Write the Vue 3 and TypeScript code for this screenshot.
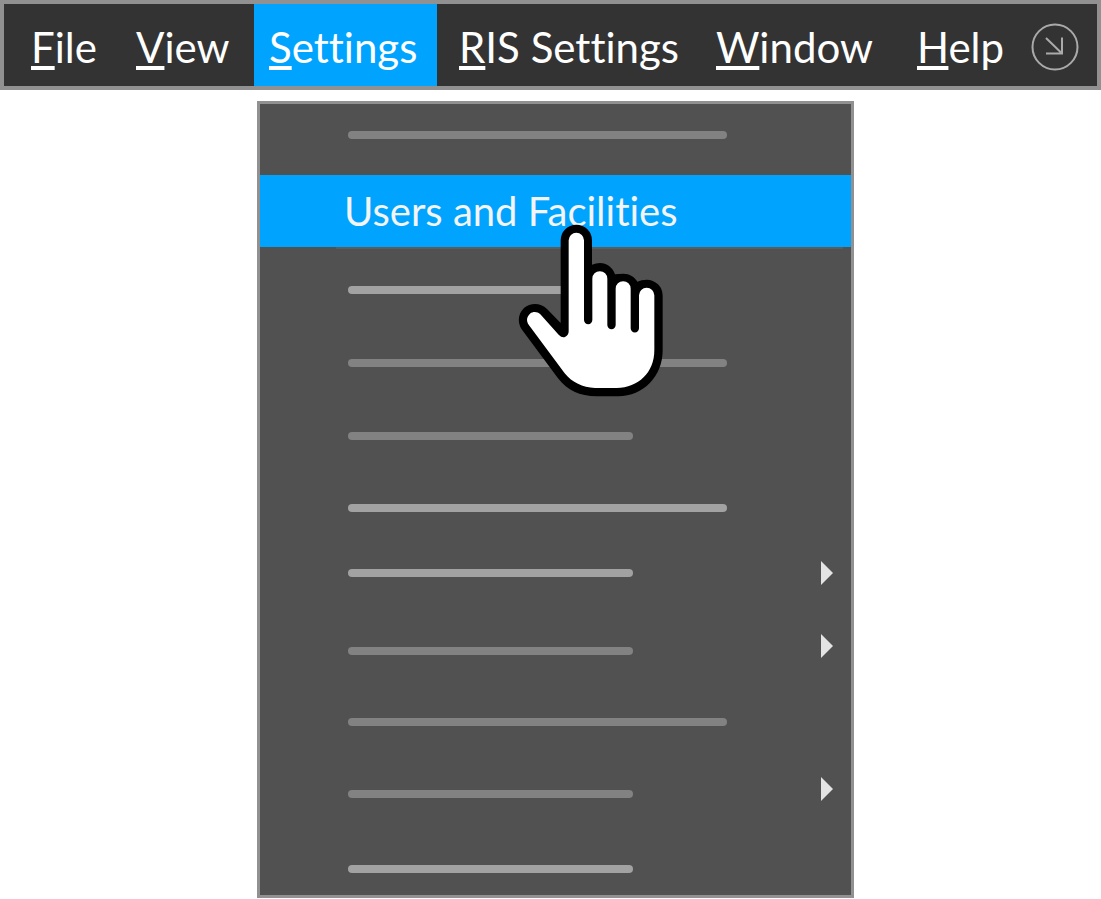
<script setup lang="ts">
interface MenuEntry {
  key: string
  rest: string
  active?: boolean
}

interface Row {
  id: number
  long: boolean
  bright: boolean
  submenu?: boolean
  level?: boolean
}

const entries: MenuEntry[] = [
  { key: 'F', rest: 'ile' },
  { key: 'V', rest: 'iew' },
  { key: 'S', rest: 'ettings', active: true },
  { key: 'R', rest: 'IS Settings' },
  { key: 'W', rest: 'indow' },
  { key: 'H', rest: 'elp' },
]

const rows: Row[] = [
  { id: 1, long: false, bright: true },
  { id: 2, long: true, bright: false },
  { id: 3, long: false, bright: false },
  { id: 4, long: true, bright: true },
  { id: 5, long: false, bright: true, submenu: true, level: true },
  { id: 6, long: false, bright: false, submenu: true },
  { id: 7, long: true, bright: false },
  { id: 8, long: false, bright: false, submenu: true },
  { id: 9, long: false, bright: true },
]
</script>

<template>
  <div class="page">
    <nav class="menubar">
      <button
        v-for="entry in entries"
        :key="entry.key"
        type="button"
        class="entry"
        :class="{ active: entry.active }"
      ><span class="accel">{{ entry.key }}</span>{{ entry.rest }}</button>
      <button type="button" class="corner" aria-label="Collapse">
        <svg class="corner-icon" viewBox="0 0 48 48" aria-hidden="true">
          <circle cx="24" cy="24" r="22.5" />
          <path d="M15 15 L31 30.5 M31 14.500V30.500H15" />
        </svg>
      </button>
    </nav>

    <div class="dropdown">
      <div class="row first"><span class="line long"></span></div>
      <button type="button" class="selected">
        Users and Facilities
        <svg class="hand" viewBox="48 189 444 525" aria-hidden="true">
          <path
            fill="#000"
            d="M182 241a47 47 0 0 1 94 0V314Q288 309 300 309C320 309 338 322 345 343Q356 341 370 341C388 341 404 350 412 365Q424 359 440 359A48 48 0 0 1 488 407V570C488 650 430 708 355 709H290C238 708 203 692 174 655L66 509C52 490 53 462 72 444C92 427 122 428 141 447L182 489Z"
          />
          <path
            fill="#fff"
            d="M206 241a23 23 0 0 1 46 0V480a12.500 12.500 0 0 0 25 0V356a22.500 22.500 0 0 1 45 0V495a12.500 12.500 0 0 0 25 0V386a22.500 22.500 0 0 1 45 0V505a12.500 12.500 0 0 0 25 0V406a23 23 0 0 1 46 0V570C463 638 415 683 350 684H285C247 682 217 668 194 640L86 494C78 483 80 470 90 461C100 454 112 455 121 463L176 524Q187 535 196 530Q206 526 206 514Z"
          />
        </svg>
      </button>
      <div
        v-for="row in rows"
        :key="row.id"
        class="row"
        :class="{ level: row.level }"
      >
        <span class="line" :class="{ long: row.long, bright: row.bright }"></span>
        <svg v-if="row.submenu" class="arrow" viewBox="0 0 12 24" aria-hidden="true">
          <path d="M0 0L12 12L0 24Z" />
        </svg>
      </div>
    </div>
  </div>
</template>

<style>
body {
  margin: 0;
  background: #fff;
}
</style>

<style scoped>
.page {
  font-family: Lato, "Open Sans", sans-serif;
  font-variant-ligatures: none;
}

button {
  margin: 0;
  border: 0;
  padding: 0;
  background: none;
  color: #fff;
  font: inherit;
  font-variant-ligatures: none;
  white-space: nowrap;
}

.menubar {
  display: grid;
  grid-template-columns: 105fr 133fr 183fr 264fr 201fr 122fr 73fr;
  box-sizing: border-box;
  height: 90px;
  padding-left: 12px;
  border: 4px solid #919191;
  background: #333;
}

.entry {
  padding: 4px 0 0 15px;
  font-size: 42px;
  line-height: 78px;
  text-align: left;
}

.entry:nth-child(4) {
  padding-left: 0;
  text-align: center;
}

.entry.active {
  background: #00a4ff;
}

.accel {
  text-decoration: underline;
  text-decoration-thickness: 4px;
  text-underline-offset: 3px;
  text-decoration-skip-ink: none;
}

.corner {
  display: flex;
  align-items: center;
  padding: 4px 0 0 7px;
}

.corner-icon {
  width: 48px;
  height: 48px;
  fill: none;
  stroke: #aaa;
  stroke-width: 2;
}

.dropdown {
  display: grid;
  grid-template-rows: 71px 72px 73px 73px 72px 65px 78px 71px 72px 75px 69px;
  margin: 11px 247px 0 257px;
  border: 3px solid #919191;
  background: #515151;
}

.row {
  display: flex;
  align-items: flex-start;
  justify-content: space-between;
  padding: 39px 18px 0 88px;
}

.row.first {
  padding-top: 27px;
}

.line {
  width: 285px;
  height: 8px;
  border-radius: 4px;
  background: #828282;
}

.line.long {
  width: 379px;
}

.line.bright {
  background: #a2a2a2;
}

.selected {
  position: relative;
  padding-left: 84px;
  background: #00a4ff;
  color: #f4f4f4;
  font-size: 40px;
  line-height: 72px;
  text-align: left;
}

.selected::after {
  content: "";
  position: absolute;
  top: 100%;
  left: 76px;
  right: 8px;
  height: 2px;
  background: #5c5c5c;
}

.hand {
  position: absolute;
  top: 48px;
  left: 256px;
  z-index: 1;
  width: 148px;
  height: 175px;
}

.arrow {
  width: 12px;
  height: 24px;
  margin-top: -13px;
  fill: #e4e4e4;
}

.level .arrow {
  margin-top: -8px;
}
</style>
